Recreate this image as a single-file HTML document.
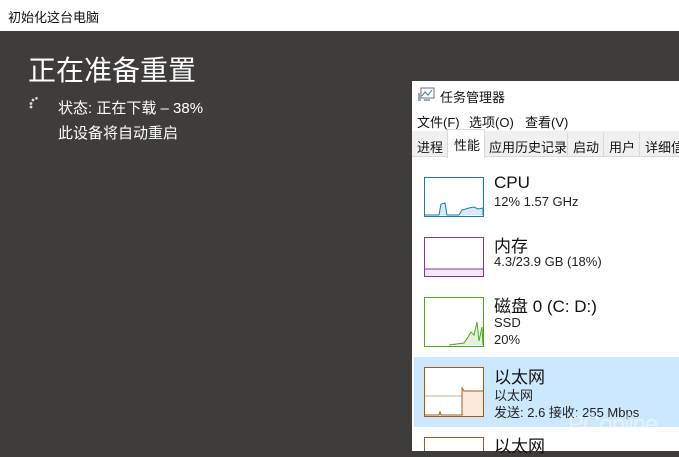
<!DOCTYPE html>
<html><head><meta charset="utf-8"><style>
*{margin:0;padding:0;box-sizing:border-box}
body{width:679px;height:451px;overflow:hidden;background:#3f3d3b;font-family:"Liberation Sans","Noto Sans CJK SC",sans-serif;position:relative}
.a{position:absolute;white-space:nowrap}
</style></head><body>
<div class="a" style="left:0;top:0;width:679px;height:31px;background:#fff"></div>
<div class="a" style="left:8px;top:7px;font-size:13px;color:#111">初始化这台电脑</div>
<div class="a" style="left:28px;top:49px;font-size:28px;color:#fff">正在准备重置</div>
<svg class="a" style="left:28px;top:96px" width="14" height="14"><g fill="#ddd"><circle cx="3" cy="11" r="1.4"/><circle cx="3" cy="7.5" r="1.4"/><circle cx="5" cy="4" r="1.4"/><circle cx="8.5" cy="2.3" r="1.3"/></g></svg>
<div class="a" style="left:58px;top:97px;font-size:15px;color:#fff">状态: 正在下载 – 38%</div>
<div class="a" style="left:58px;top:122px;font-size:15px;color:#fff">此设备将自动重启</div>

<div class="a" style="left:412px;top:81px;width:267px;height:370px;background:#fff"></div>
<svg class="a" style="left:417px;top:87px" width="18" height="16"><rect x="4" y="1" width="13" height="10" fill="#fff" stroke="#678" /><polyline points="5,9 8,5 11,8 15,3" fill="none" stroke="#37a" /><rect x="1" y="6" width="3" height="8" fill="#9ab"/><rect x="7" y="12" width="6" height="2" fill="#9ab"/></svg>
<div class="a" style="left:440px;top:87px;font-size:13px;color:#111">任务管理器</div>
<div class="a" style="left:417px;top:112px;font-size:13px;color:#111">文件(F)</div>
<div class="a" style="left:469px;top:112px;font-size:13px;color:#111">选项(O)</div>
<div class="a" style="left:525px;top:112px;font-size:13px;color:#111">查看(V)</div>
<div class="a" style="left:412px;top:131px;width:267px;height:26px;background:#f0f0f0;border-bottom:1px solid #d9d9d9"></div>
<div class="a" style="left:447px;top:129px;width:38px;height:29px;background:#fff;border:1px solid #d9d9d9;border-bottom:none"></div>
<div class="a" style="left:417px;top:137px;font-size:13px;color:#111">进程</div>
<div class="a" style="left:454px;top:135px;font-size:13px;color:#111">性能</div>
<div class="a" style="left:489px;top:137px;font-size:13px;color:#111">应用历史记录</div>
<div class="a" style="left:567px;top:133px;width:1px;height:24px;background:#d9d9d9"></div>
<div class="a" style="left:573px;top:137px;font-size:13px;color:#111">启动</div>
<div class="a" style="left:603px;top:133px;width:1px;height:24px;background:#d9d9d9"></div>
<div class="a" style="left:609px;top:137px;font-size:13px;color:#111">用户</div>
<div class="a" style="left:639px;top:133px;width:1px;height:24px;background:#d9d9d9"></div>
<div class="a" style="left:645px;top:137px;font-size:13px;color:#111">详细信</div>

<svg class="a" style="left:424px;top:177px" width="60" height="40"><rect x=".5" y=".5" width="59" height="39" fill="#fff" stroke="#1c7ab3"/><polyline points="1,38 15,38 17,27 21,26 23,38 35,38 38,33 45,31 50,30 54,32 59,31 59,38" fill="#d9eaf6" stroke="#1c7ab3"/></svg>
<div class="a" style="left:494px;top:173px;font-size:17px;color:#111">CPU</div>
<div class="a" style="left:494px;top:194px;font-size:13px;color:#222">12% 1.57 GHz</div>
<svg class="a" style="left:424px;top:237px" width="60" height="40"><rect x=".5" y=".5" width="59" height="39" fill="#fff" stroke="#8b2fa8"/><rect x="1" y="32" width="58" height="7" fill="#f4e8f8"/><line x1="1" y1="32" x2="59" y2="32" stroke="#8b2fa8"/></svg>
<div class="a" style="left:494px;top:232px;font-size:17px;color:#111">内存</div>
<div class="a" style="left:494px;top:254px;font-size:13px;color:#222">4.3/23.9 GB (18%)</div>
<svg class="a" style="left:424px;top:297px" width="60" height="50"><rect x=".5" y=".5" width="59" height="49" fill="#fff" stroke="#4ea81e"/><polyline points="25,48 40,46 44,40 47,35 50,38 53,25 55,44 58,30 59,48" fill="#e3f3da" stroke="#4ea81e"/></svg>
<div class="a" style="left:494px;top:292px;font-size:17px;color:#111">磁盘 0 (C: D:)</div>
<div class="a" style="left:494px;top:315px;font-size:13px;color:#222">SSD</div>
<div class="a" style="left:494px;top:332px;font-size:13px;color:#222">20%</div>
<div class="a" style="left:414px;top:357px;width:265px;height:70px;background:#cce8ff"></div>
<svg class="a" style="left:424px;top:367px" width="60" height="50"><rect x=".5" y=".5" width="59" height="49" fill="#fff" stroke="#a5581a"/><line x1="1" y1="29" x2="59" y2="29" stroke="#a5581a" stroke-width=".6"/><polygon points="38,49 38,21 41,24 59,24 59,49" fill="#fbe9dc"/><polyline points="1,48 15,48 16,45 17,48 38,48 38,21 40,24 59,24" fill="none" stroke="#a5581a"/></svg>
<div class="a" style="left:494px;top:363px;font-size:17px;color:#111">以太网</div>
<div class="a" style="left:494px;top:385px;font-size:13px;color:#222">以太网</div>
<div class="a" style="left:494px;top:402px;font-size:13px;color:#222">发送: 2.6 接收: 255 Mbps</div>
<svg class="a" style="left:424px;top:437px" width="60" height="14"><rect x=".5" y=".5" width="59" height="20" fill="#fff" stroke="#a5581a"/></svg>
<div class="a" style="left:494px;top:432px;font-size:17px;color:#111">以太网</div>
<div class="a" style="left:568px;top:411px;font-size:24px;color:rgba(255,255,255,.45);letter-spacing:-1px">PConline</div>
</body></html>
